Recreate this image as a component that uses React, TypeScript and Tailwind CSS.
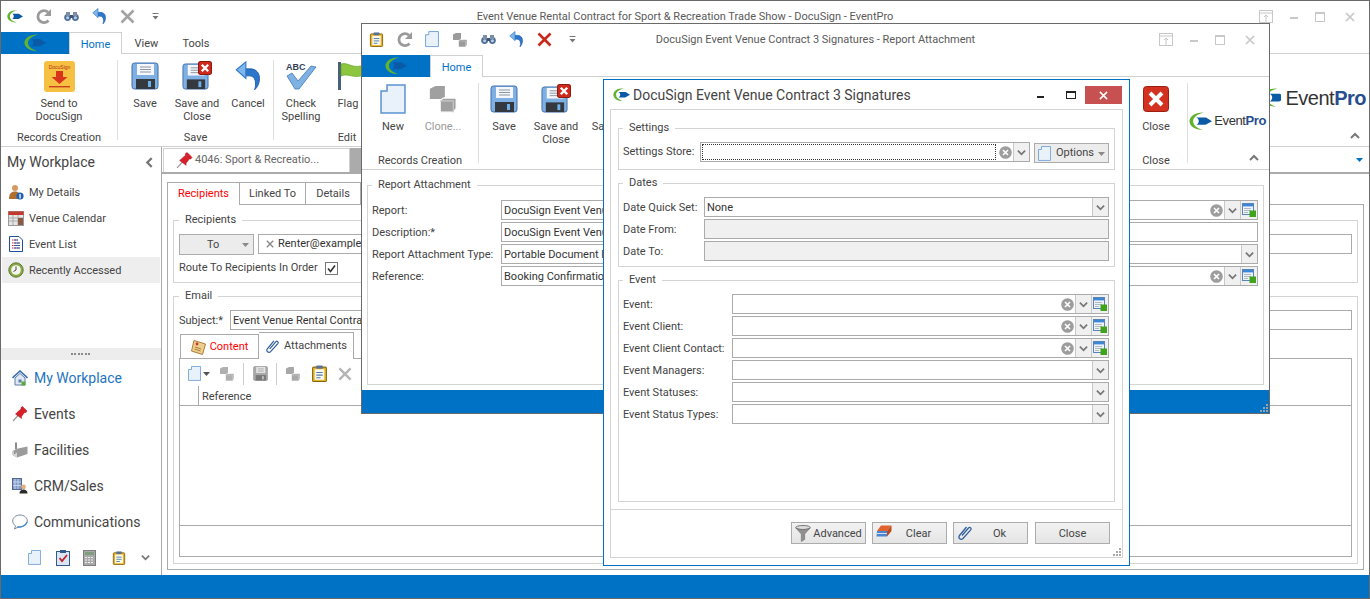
import { ReactNode } from "react"

// ---- icons ----
const Logo = ({ w = 16 }: { w?: number }) => (
  <svg width={w} height={w * 0.8} viewBox="0 0 25 20">
    <path d="M16 0.5C7 0 0.5 4.5 0.5 10C0.5 15.5 7 19.5 15 19.5C9 17.5 4.5 14.5 4.5 10C4.5 5.8 9 2.5 16 0.5Z" fill="#62b32e" />
    <path d="M8 6L18.5 6L25 10L18 14L8 14C11.5 12.5 11.5 7.5 8 6Z" fill="#0b5aa6" />
  </svg>
)
const Refresh = () => (
  <svg width="17" height="17" viewBox="0 0 17 17">
    <path d="M13.5 12.5A6 6 0 1 1 13 4.2" fill="none" stroke="#9a9a9a" strokeWidth="2.8" />
    <path d="M16 1V8H9Z" fill="#9a9a9a" />
  </svg>
)
const Binoculars = () => (
  <svg width="15" height="11" viewBox="0 0 15 11">
    <circle cx="3.6" cy="6.5" r="3.4" fill="#4f6f95" />
    <circle cx="11.4" cy="6.5" r="3.4" fill="#4f6f95" />
    <rect x="2" y="1" width="4" height="4" fill="#7b8ea6" />
    <rect x="9" y="1" width="4" height="4" fill="#7b8ea6" />
    <rect x="6" y="4" width="3" height="3" fill="#3c5270" />
    <circle cx="3.6" cy="6.8" r="1.5" fill="#b8cfe8" />
    <circle cx="11.4" cy="6.8" r="1.5" fill="#b8cfe8" />
  </svg>
)
const Undo = ({ s = 15 }: { s?: number }) => (
  <svg width={s} height={s * 1.1} viewBox="0 0 15 17">
    <path d="M4 4.5H8.5C12 4.5 13.8 7 13.8 10C13.8 12.5 12.8 15 11 16.5C12 13.5 12 8.5 8 8.5H5Z" fill="#2d76c9" stroke="#1d5aa5" strokeWidth=".5" />
    <path d="M6 0.5V10L0.5 5Z" fill="#7cb6ea" stroke="#2d76c9" strokeWidth=".6" />
  </svg>
)
const Cross = ({ c = "#a3a3a3", s = 15 }: { c?: string; s?: number }) => (
  <svg width={s} height={s} viewBox="0 0 15 15">
    <path d="M1.5 1.5L13.5 13.5M13.5 1.5L1.5 13.5" stroke={c} strokeWidth="2.6" />
  </svg>
)
const QatMore = () => (
  <svg width="7" height="7" viewBox="0 0 7 7">
    <path d="M0.5 0.5H6.5" stroke="#777" />
    <path d="M0.5 3H6.5L3.5 6.5Z" fill="#777" />
  </svg>
)
const DocuSignIcon = () => (
  <svg width="31" height="31" viewBox="0 0 31 31">
    <rect width="31" height="31" rx="3" fill="#f6c043" />
    <text x="15.5" y="8" textAnchor="middle" fontSize="5" fill="#b5301a" fontFamily="Liberation Sans, sans-serif">DocuSign</text>
    <path d="M12 10H19V16H23.5L15.5 23L7.5 16H12Z" fill="#d8351c" />
    <rect x="5" y="25" width="21" height="1.4" fill="#c9411f" />
  </svg>
)
const Floppy = ({ s = 28, gray = false }: { s?: number; gray?: boolean }) => (
  <svg width={s} height={s} viewBox="0 0 28 28">
    <rect x="1" y="1" width="26" height="26" rx="2.5" fill={gray ? "#a8a8a8" : "#7fb0e4"} stroke={gray ? "#8a8a8a" : "#3f6fae"} />
    <rect x="6" y="2" width="17" height="11" fill={gray ? "#e6e6e6" : "#f5f7fa"} />
    <path d="M9 5H20M9 7.5H20M9 10H20" stroke={gray ? "#999" : "#8d96a3"} />
    <rect x="5" y="17" width="19" height="10" fill={gray ? "#777" : "#34383f"} />
    <rect x="17" y="19" width="3" height="6" fill={gray ? "#ccc" : "#6fb0ea"} />
  </svg>
)
const RedX = ({ s = 13 }: { s?: number }) => (
  <svg width={s} height={s} viewBox="0 0 13 13">
    <rect x="0.5" y="0.5" width="12" height="12" rx="2" fill="#cf2a1c" stroke="#8c1a10" />
    <path d="M3.5 3.5L9.5 9.5M9.5 3.5L3.5 9.5" stroke="#fff" strokeWidth="2.2" />
  </svg>
)
const FloppyX = () => (
  <div className="relative h-[30px] w-[30px]">
    <div className="pt-[2px]">
      <Floppy s={27} />
    </div>
    <div className="absolute right-0 top-0">
      <RedX s={14} />
    </div>
  </div>
)
const CheckAbc = () => (
  <svg width="32" height="30" viewBox="0 0 32 30">
    <text x="1" y="9" fontSize="9" fontWeight="700" fill="#33415c" fontFamily="Liberation Sans, sans-serif">ABC</text>
    <path d="M2 15L7 12L13 20L26 5L31 6L14 28H10Z" fill="#7fb2e2" stroke="#3d79b8" strokeWidth=".8" />
  </svg>
)
const Flag = () => (
  <svg width="32" height="30" viewBox="0 0 32 30">
    <rect x="1" y="1" width="3" height="28" fill="#47607e" />
    <path d="M4 3C11 1 14 7 24 5L31 10L24 15C15 17 11 12 4 15Z" fill="#8cc63f" stroke="#5c9a22" strokeWidth=".6" />
  </svg>
)
const ClipBoard = ({ s = 16 }: { s?: number }) => (
  <svg width={s} height={s} viewBox="0 0 16 16">
    <rect x="1.5" y="2" width="13" height="13.5" rx="1" fill="#e6b422" stroke="#8a6510" />
    <rect x="3.5" y="4" width="9" height="10" fill="#fdf9e8" />
    <rect x="5" y="0.5" width="6" height="3" fill="#59708f" />
    <path d="M5 7H11M5 9.5H11M5 12H9" stroke="#4d79b0" />
  </svg>
)
const NewDoc = ({ s = 16 }: { s?: number }) => (
  <svg width={s} height={s * 1.15} viewBox="0 0 26 30">
    <path d="M1 7L7 7L7 1H25V29H1Z" fill="#e9f2fb" stroke="#5b93d1" strokeWidth="1.5" />
  </svg>
)
const Clone = ({ s = 16, c = "#9b9b9b" }: { s?: number; c?: string }) => (
  <svg width={s} height={s} viewBox="0 0 16 16">
    <path d="M1 2.5L4 1H9V6.5L8 8H1Z" fill={c} />
    <path d="M6.5 9L8 7.5H15V13L13.5 15H6.5Z" fill={c} stroke="#fff" strokeWidth=".6" />
    <path d="M6.5 9H13.5V15" fill="none" stroke="#c9c9c9" strokeWidth=".6" />
  </svg>
)
const BigClose = () => (
  <svg width="26" height="26" viewBox="0 0 26 26">
    <rect x="0.5" y="0.5" width="25" height="25" rx="3" fill="#d33220" stroke="#9c1e10" />
    <path d="M7 7L19 19M19 7L7 19" stroke="#fff" strokeWidth="4" />
  </svg>
)
const Person = () => (
  <svg width="16" height="16" viewBox="0 0 16 16">
    <circle cx="7" cy="4" r="3" fill="#d39a61" />
    <path d="M1 15C1 9 4 7.5 7 7.5C10 7.5 12 9 12 15Z" fill="#b06f2e" />
    <circle cx="12" cy="12" r="3.6" fill="#1d5fb0" />
    <rect x="11.4" y="10" width="1.3" height="4.4" fill="#fff" />
  </svg>
)
const Calendar = () => (
  <svg width="16" height="16" viewBox="0 0 16 16">
    <rect x="0.5" y="1.5" width="15" height="14" fill="#e6e6e6" stroke="#999" />
    <rect x="0.5" y="1.5" width="15" height="3.5" fill="#c0392b" />
    <path d="M1 8H15M1 11H15M5 5V15M10 5V15" stroke="#aaa" />
    <rect x="10" y="8" width="5" height="7" fill="#8a5a44" />
  </svg>
)
const ListDoc = () => (
  <svg width="14" height="16" viewBox="0 0 14 16">
    <path d="M0.5 0.5H10L13.5 4V15.5H0.5Z" fill="#fff" stroke="#1d4f91" />
    <path d="M3 4H9M3 7H11M3 9.5H11M3 12H11" stroke="#d23" strokeDasharray="1.5 1" />
    <path d="M5 4H9M5 7H11M5 9.5H11M5 12H11" stroke="#2d5fa5" />
  </svg>
)
const Clock = () => (
  <svg width="16" height="16" viewBox="0 0 16 16">
    <circle cx="8" cy="8" r="7.2" fill="#8aa84a" stroke="#5e7a2a" />
    <circle cx="8" cy="8" r="4.8" fill="#f5f5ef" />
    <path d="M8 4.5V8L5.5 9.5" fill="none" stroke="#444" />
  </svg>
)
const Pin = ({ s = 16 }: { s?: number }) => (
  <svg width={s} height={s} viewBox="0 0 16 16">
    <path d="M1 15L6 9.5" stroke="#9a9a9a" strokeWidth="1.2" />
    <path d="M5 6.5L9 3L9 1.5L10.5 0.5L15 5L14 6.5L12.5 6.5L9.5 10.5L9.5 12.5L3.5 8Z" fill="#d8202a" stroke="#a3121a" strokeWidth=".5" />
  </svg>
)
const House = () => (
  <svg width="16" height="16" viewBox="0 0 16 16">
    <path d="M0.5 8L8 1L15.5 8" fill="none" stroke="#3e6ea8" strokeWidth="1.6" />
    <path d="M3 8V15H13V8L8 3.5Z" fill="#dfe9f5" stroke="#5a7fa8" />
    <rect x="6.5" y="9.5" width="3" height="3" fill="#5a7fa8" />
    <rect x="9.5" y="11.5" width="4" height="4" fill="#5fa83a" />
  </svg>
)
const Factory = () => (
  <svg width="16" height="16" viewBox="0 0 16 16">
    <rect x="3" y="0.5" width="2" height="7" fill="#8b8b8b" />
    <path d="M0.5 9L6 6.5L15.5 4.5V12L5 15.5L0.5 13Z" fill="#9b9b9b" />
    <path d="M0.5 9L5 11V15.5L0.5 13Z" fill="#d4d4d4" />
    <path d="M2 11H3.5" stroke="#444" />
  </svg>
)
const Crm = () => (
  <svg width="16" height="16" viewBox="0 0 16 16">
    <rect x="0.5" y="0.5" width="9" height="11" fill="#7f97c7" stroke="#55688f" />
    <path d="M3 1V11M6 1V11M1 4H9M1 7.5H9" stroke="#c7d3ec" />
    <circle cx="11.5" cy="9" r="2.4" fill="#e2b07c" />
    <path d="M7.5 15.5C7.5 12.5 9.5 11.5 11.5 11.5C13.5 11.5 15.5 12.5 15.5 15.5Z" fill="#2b2b2b" />
  </svg>
)
const Bubble = () => (
  <svg width="16" height="16" viewBox="0 0 16 16">
    <path d="M8 1C3.8 1 0.7 3.7 0.7 7C0.7 9 1.8 10.7 3.5 11.8L2.5 15L6.5 12.8C10.5 13.4 15.3 11 15.3 7C15.3 3.7 12.2 1 8 1Z" fill="#fff" stroke="#7a8a9c" />
    <path d="M5 13C9.5 13.6 14 11.4 15 8" fill="none" stroke="#3b86d1" strokeWidth="1.2" />
  </svg>
)
const Clip = ({ s = 14 }: { s?: number }) => (
  <svg width={s} height={s} viewBox="0 0 16 16">
    <path d="M5 11L11.5 3.5C12.8 2 15 3.8 13.7 5.4L6 14C4 16 0.5 13.5 2.5 11L9.5 2.5" transform="translate(0 -.5)" fill="none" stroke="#2f5f9e" strokeWidth="1.3" />
  </svg>
)
const Note = () => (
  <svg width="15" height="15" viewBox="0 0 15 15">
    <path d="M3 0.5L14.5 4L11.5 14.5L0.5 11Z" fill="#eecd8e" stroke="#a97f3a" />
    <circle cx="6" cy="4" r="1.4" fill="#c0392b" />
    <path d="M4 7L10 9M3.5 9L9.5 11" stroke="#a97f3a" />
  </svg>
)
const Funnel = () => (
  <svg width="16" height="17" viewBox="0 0 16 17">
    <ellipse cx="8" cy="2.5" rx="7.3" ry="2" fill="#ddd" stroke="#777" />
    <path d="M0.8 3L6.3 9V16.5L9.7 14.5V9L15.2 3C12 5 4 5 0.8 3Z" fill="#8f8f8f" stroke="#666" strokeWidth=".5" />
  </svg>
)
const Eraser = () => (
  <svg width="16" height="13" viewBox="0 0 16 13">
    <path d="M5 0.5H15.5L11 6H1Z" fill="#e2622e" />
    <path d="M1 6H11V11.5H0.5Z" fill="#4a86d1" />
    <path d="M11 6L15.5 0.5V6L11 11.5Z" fill="#b94a1f" />
    <path d="M1 8.5H11" stroke="#cfe0f5" />
  </svg>
)
const GridAdd = () => (
  <svg width="14" height="14" viewBox="0 0 14 14">
    <rect x="0.5" y="0.5" width="11" height="11" fill="#eef3f9" stroke="#5a84b5" />
    <rect x="1" y="1" width="10" height="2.4" fill="#3c86d6" />
    <path d="M2 5.5H9M2 7.5H9M2 9.5H6" stroke="#b0b8c2" />
    <rect x="7.5" y="7.5" width="6.5" height="6.5" fill="#3fa41b" />
  </svg>
)
const ClearDot = () => (
  <svg width="13" height="13" viewBox="0 0 13 13">
    <circle cx="6.5" cy="6.5" r="6.3" fill="#9d9d9d" />
    <path d="M4 4L9 9M9 4L4 9" stroke="#fff" strokeWidth="1.6" />
  </svg>
)
const Chev = ({ dir = "down", c = "#777", s = 9 }: { dir?: "down" | "up" | "left"; c?: string; s?: number }) => {
  const d = dir === "down" ? "M1 3L5 7L9 3" : dir === "up" ? "M1 7L5 3L9 7" : "M7 1L3 5L7 9"
  return (
    <svg width={s} height={s} viewBox="0 0 10 10">
      <path d={d} fill="none" stroke={c} strokeWidth="2" />
    </svg>
  )
}
const Tri = ({ c = "#8a8a8a" }: { c?: string }) => (
  <svg width="7" height="4" viewBox="0 0 7 4">
    <path d="M0 0H7L3.5 4Z" fill={c} />
  </svg>
)
const Grip = () => (
  <svg width="10" height="10" viewBox="0 0 10 10" fill="#a8a8a8">
    <rect x="7" y="1" width="2" height="2" />
    <rect x="4" y="4" width="2" height="2" />
    <rect x="7" y="4" width="2" height="2" />
    <rect x="1" y="7" width="2" height="2" />
    <rect x="4" y="7" width="2" height="2" />
    <rect x="7" y="7" width="2" height="2" />
  </svg>
)
const Calc = () => (
  <svg width="13" height="16" viewBox="0 0 13 16">
    <rect x="0.5" y="0.5" width="12" height="15" fill="#a9a9a9" stroke="#7d7d7d" />
    <rect x="2" y="2" width="9" height="3" fill="#7f9e7f" />
    <path d="M2 7.5H11M2 10H11M2 12.5H11" stroke="#eee" strokeDasharray="2 1" />
  </svg>
)
const CheckBoard = () => (
  <svg width="14" height="16" viewBox="0 0 14 16">
    <rect x="0.5" y="1.5" width="13" height="14" fill="#dbe6f3" stroke="#33598d" />
    <rect x="4" y="0" width="6" height="3" fill="#33598d" />
    <path d="M3.5 8L6 11L11 5" fill="none" stroke="#c2202c" strokeWidth="1.8" />
  </svg>
)
const WinControls = () => (
  <div className="flex items-center justify-end">
    <svg width="14" height="13" viewBox="0 0 14 13" className="mr-[17px]">
      <rect x="0.5" y="0.5" width="13" height="12" fill="none" stroke="#c8c8c8" />
      <path d="M1 3H13" stroke="#c8c8c8" />
      <path d="M7 12V5M5 7L7 5L9 7" fill="none" stroke="#c8c8c8" />
    </svg>
    <svg width="10" height="3" viewBox="0 0 10 3" className="mr-[15px] mt-[3px]">
      <rect width="8" height="2" fill="#c8c8c8" />
    </svg>
    <svg width="10" height="10" viewBox="0 0 10 10" className="mr-[20px]">
      <rect x="0.5" y="0.5" width="9" height="9" fill="none" stroke="#c8c8c8" />
      <rect x="0" y="0" width="10" height="2" fill="#c8c8c8" />
    </svg>
    <div className="mr-[14px]">
      <Cross c="#c8c8c8" s={10} />
    </div>
  </div>
)

// ---- shared bits ----
const Qat = ({ children }: { children: ReactNode }) => (
  <div className="flex h-full w-[28px] items-center justify-center">{children}</div>
)

function TitleBar({ title, items }: { title: string; items: ReactNode[] }) {
  return (
    <div className="grid h-[31px] grid-cols-[1fr_auto_1fr] items-center bg-white">
      <div className="flex h-full items-center">
        {items.map((it, i) => (
          <Qat key={i}>{it}</Qat>
        ))}
      </div>
      <div className="pt-[1px] text-[#5a5a5a]">{title}</div>
      <WinControls />
    </div>
  )
}

function RibbonTabs({ extra }: { extra?: boolean }) {
  return (
    <div className="flex h-[22px] border-b border-[#d0d0d0] bg-white">
      <div className="flex h-[22px] w-[68px] items-center justify-center bg-[#0072c6]">
        <Logo w={22} />
      </div>
      <div className="-mb-px flex h-[22px] w-[53px] items-center justify-center border border-b-0 border-[#d0d0d0] bg-white pt-[3px] text-[#0072c6]">
        Home
      </div>
      {extra && (
        <>
          <div className="flex w-[49px] items-center justify-center pt-[4px] text-[#444]">View</div>
          <div className="flex w-[50px] items-center justify-center pt-[4px] text-[#444]">Tools</div>
        </>
      )}
    </div>
  )
}

function RibbonBtn({ w, icon, label, dim }: { w: number; icon: ReactNode; label: ReactNode; dim?: boolean }) {
  return (
    <div className="flex shrink-0 flex-col items-center pt-[6px]" style={{ width: w }}>
      <div className="flex h-[32px] items-center justify-center">{icon}</div>
      <div className={`mt-[5px] text-center leading-[13px] ${dim ? "text-[#9a9a9a]" : "text-[#444]"}`}>{label}</div>
    </div>
  )
}

function RibbonGroup({ w, caption, children }: { w: number; caption?: string; children: ReactNode }) {
  return (
    <div className="flex h-full shrink-0 flex-col" style={{ width: w }}>
      <div className="flex h-[77px]">{children}</div>
      <div className="h-[14px] text-center leading-[14px] text-[#444]">{caption}</div>
    </div>
  )
}

const RibbonSep = () => <div className="my-[6px] w-px shrink-0 bg-[#dedede]" />

function Group({ title, h, className, children }: { title: string; h: number; className?: string; children: ReactNode }) {
  return (
    <fieldset className={`border border-[#d4d4d4] ${className ?? ""}`} style={{ height: h }}>
      <legend className="px-[6px] leading-[16px] text-[#444]">{title}</legend>
      {children}
    </fieldset>
  )
}

function Input({ value, clear, drop, add, gray, focus, className }: { value?: string; clear?: boolean; drop?: boolean; add?: boolean; gray?: boolean; focus?: boolean; className?: string }) {
  return (
    <div className={`flex h-[20px] min-w-0 flex-1 items-stretch border border-[#ababab] ${gray ? "bg-[#f0f0f0]" : "bg-white"} ${className ?? ""}`}>
      <div className={`min-w-0 flex-1 overflow-hidden whitespace-nowrap px-[2px] leading-[20px] text-[#333] ${focus ? "m-px border border-dotted border-[#333] leading-[14px]" : ""}`}>{value}</div>
      {clear && (
        <div className="flex w-[16px] items-center justify-center">
          <ClearDot />
        </div>
      )}
      {drop && (
        <div className="flex w-[16px] items-center justify-center border-l border-[#c8c8c8] bg-[#f0f0f0]">
          <Chev />
        </div>
      )}
      {add && (
        <div className="flex w-[17px] items-center justify-center border-l border-[#c8c8c8] bg-[#f0f0f0]">
          <GridAdd />
        </div>
      )}
    </div>
  )
}

function Row({ label, labelW, children, className }: { label: string; labelW: number; children: ReactNode; className?: string }) {
  return (
    <div className={`flex h-[20px] items-center ${className ?? "mb-[2px]"}`}>
      <div className="shrink-0 whitespace-nowrap pt-[2px] text-[#444]" style={{ width: labelW }}>
        {label}
      </div>
      {children}
    </div>
  )
}

function DialogBtn({ icon, label, className }: { icon?: ReactNode; label: string; className?: string }) {
  return (
    <div className={`relative flex h-[22px] w-[75px] items-center justify-center border border-[#acacac] bg-gradient-to-b from-[#f2f2f2] to-[#e5e5e5] pt-[2px] text-[#444] ${icon ? "pl-[18px]" : ""} ${className ?? ""}`}>
      {icon && <div className="absolute left-[3px] top-[2px]">{icon}</div>}
      <span>{label}</span>
    </div>
  )
}

const SideItem = ({ icon, label, active }: { icon: ReactNode; label: string; active?: boolean }) => (
  <div className={`mx-px flex h-[26px] items-center ${active ? "bg-[#eeeeee]" : ""}`}>
    <div className="flex w-[27px] justify-center">{icon}</div>
    <span className="pt-[2px] text-[#444]">{label}</span>
  </div>
)

const NavItem = ({ icon, label, blue }: { icon: ReactNode; label: string; blue?: boolean }) => (
  <div className="flex h-[36px] items-center pl-[11px]">
    <div className="w-[22px]">{icon}</div>
    <span className={`text-[14px] ${blue ? "text-[#1f74c0]" : "text-[#444]"}`}>{label}</span>
  </div>
)

const GridTool = ({ children, w = 26 }: { children: ReactNode; w?: number }) => (
  <div className="flex items-center justify-center" style={{ width: w }}>
    {children}
  </div>
)

const ToolSep = () => <div className="mx-[3px] h-[22px] w-px bg-[#cfcfcf]" />

function MainWindow() {
  return (
    <div className="flex h-[599px] w-[1370px] flex-col overflow-hidden border border-[#6a6a6a] bg-white">
      <TitleBar
        title="Event Venue Rental Contract for Sport & Recreation Trade Show - DocuSign - EventPro"
        items={[<Logo key="a" />, <Refresh key="b" />, <Binoculars key="c" />, <Undo key="d" />, <Cross key="e" />, <QatMore key="f" />]}
      />
      <RibbonTabs extra />
      <div className="flex h-[93px] border-b border-[#d0d0d0]">
        <RibbonGroup w={116} caption="Records Creation">
          <RibbonBtn w={116} icon={<DocuSignIcon />} label={<>Send to<br />DocuSign</>} />
        </RibbonGroup>
        <RibbonSep />
        <RibbonGroup w={155} caption="Save">
          <div className="w-[2px]" />
          <RibbonBtn w={50} icon={<Floppy />} label="Save" />
          <RibbonBtn w={54} icon={<FloppyX />} label={<>Save and<br />Close</>} />
          <RibbonBtn w={48} icon={<Undo s={27} />} label="Cancel" />
        </RibbonGroup>
        <RibbonSep />
        <RibbonGroup w={146} caption="Edit">
          <RibbonBtn w={54} icon={<CheckAbc />} label={<>Check<br />Spelling</>} />
          <RibbonBtn w={40} icon={<div className="ml-[10px]"><Flag /></div>} label="Flag" />
        </RibbonGroup>
        <div className="flex-1" />
        <div className="flex w-[104px] flex-col items-end pr-[3px]">
          <div className="mt-[33px] flex items-center">
            <div className="mr-[5px] w-[19px] overflow-hidden">
              <Logo w={24} />
            </div>
            <span className="font-['Liberation_Sans',sans-serif] text-[20px] leading-[22px] tracking-[-0.5px] text-[#333]">
              Event<b className="text-[#274e8f]">Pro</b>
            </span>
          </div>
          <div className="mr-[6px] mt-[22px]">
            <Chev dir="up" s={10} />
          </div>
        </div>
      </div>
      <div className="flex min-h-0 flex-1">
        {/* left navigation */}
        <div className="flex w-[161px] shrink-0 flex-col border-r border-[#a9a9a9]">
          <div className="flex h-[32px] items-center justify-between pb-[1px] pl-[6px] pr-[6px]">
            <span className="text-[14px] text-[#444]">My Workplace</span>
            <Chev dir="left" s={11} />
          </div>
          <SideItem icon={<Person />} label="My Details" />
          <SideItem icon={<Calendar />} label="Venue Calendar" />
          <SideItem icon={<ListDoc />} label="Event List" />
          <SideItem icon={<Clock />} label="Recently Accessed" active />
          <div className="flex-1" />
          <div className="flex h-[12px] items-center justify-center bg-[#ededed]">
            <div className="h-[2px] w-[20px] bg-[repeating-linear-gradient(90deg,#8a8a8a_0_2px,transparent_2px_3.5px)]" />
          </div>
          <NavItem blue icon={<House />} label="My Workplace" />
          <NavItem icon={<Pin />} label="Events" />
          <NavItem icon={<Factory />} label="Facilities" />
          <NavItem icon={<Crm />} label="CRM/Sales" />
          <NavItem icon={<Bubble />} label="Communications" />
          <div className="flex h-[35px] items-center pl-[27px]">
            <div className="w-[28px]"><NewDoc s={13} /></div>
            <div className="w-[27px]"><CheckBoard /></div>
            <div className="w-[29px]"><Calc /></div>
            <div className="w-[29px]"><ClipBoard s={14} /></div>
            <Chev s={9} />
          </div>
        </div>
        {/* document area */}
        <div className="flex min-w-0 flex-1 flex-col">
          <div className="flex h-[27px] items-end border-b-2 border-[#ababab] pl-px">
            <div className="flex h-[24px] w-[187px] items-center border border-b-0 border-[#d0d0d0] pl-[12px] text-[#666]">
              <Pin s={17} />
              <span className="ml-[2px]">4046: Sport &amp; Recreatio...</span>
            </div>
            <div className="h-[24px] w-[40px] bg-[#ababab]" />
            <div className="flex-1" />
            <div className="mb-[10px] mr-[6px]">
              <Tri c="#0072c6" />
            </div>
          </div>
          <div className="flex min-h-0 flex-1 flex-col px-[5px] pb-[5px] pt-[7px]">
            <div className="flex h-[23px] items-end text-[#444]">
              <div className="-mb-px z-10 flex h-[23px] w-[73px] items-center justify-center border border-b-0 border-[#ababab] bg-white text-[#f00]">Recipients</div>
              <div className="flex h-[22px] w-[66px] items-center justify-center border border-b-0 border-l-0 border-[#ababab] pt-[1px]">Linked To</div>
              <div className="flex h-[22px] w-[55px] items-center justify-center border border-b-0 border-l-0 border-[#ababab] pt-[1px]">Details</div>
            </div>
            <div className="min-h-0 flex-1 border border-[#ababab] px-[5px] pt-[7px]">
              <Group title="Recipients" h={71} className="px-[5px] pt-[6px]">
                <div className="flex items-start">
                  <div className="flex h-[21px] w-[75px] items-center justify-between border border-[#acacac] bg-[#ececec] pl-[27px] pr-[4px] pt-[1px] text-[#444]">
                    <span>To</span>
                    <Tri />
                  </div>
                  <div className="ml-[4px] flex h-[20px] flex-1 items-center border border-[#ababab] pl-[7px] text-[#333]">
                    <Cross c="#888" s={8} />
                    <span className="ml-[4px]">Renter@example</span>
                  </div>
                </div>
                <div className="mt-[4px] flex h-[18px] items-center text-[#444]">
                  Route To Recipients In Order
                  <div className="ml-[7px] flex h-[13px] w-[13px] items-center justify-center border border-[#777]">
                    <svg width="9" height="9" viewBox="0 0 9 9"><path d="M1 4.5L3.5 7.5L8 1.5" fill="none" stroke="#333" strokeWidth="1.6" /></svg>
                  </div>
                </div>
              </Group>
              <Group title="Email" h={276} className="mt-[5px] px-[5px] pt-[6px]">
                <Row label="Subject:*" labelW={51} className="mb-0">
                  <Input value="Event Venue Rental Contra" />
                </Row>
                <div className="mt-[2px] flex h-[26px] items-end pl-px">
                  <div className="flex h-[24px] w-[79px] items-center justify-center gap-[4px] border border-b-0 border-[#ababab] pt-[1px] text-[#f00]">
                    <Note />
                    Content
                  </div>
                  <div className="-mb-px z-10 flex h-[27px] w-[95px] items-center justify-center gap-[4px] border border-b-0 border-l-0 border-[#ababab] bg-white text-[#444]">
                    <Clip s={15} />
                    Attachments
                  </div>
                </div>
                <div className="flex h-[199px] flex-col border border-[#ababab]">
                  <div className="flex h-[27px] items-center pl-[6px] pt-[2px]">
                    <div className="flex w-[28px] items-center gap-[2px] pl-[2px]">
                      <NewDoc s={13} />
                      <Tri c="#555" />
                    </div>
                    <GridTool><Clone c="#b0b0b0" /></GridTool>
                    <ToolSep />
                    <GridTool w={26}><Floppy s={15} gray /></GridTool>
                    <ToolSep />
                    <GridTool w={26}><Clone c="#a8a8a8" /></GridTool>
                    <GridTool w={26}><ClipBoard s={17} /></GridTool>
                    <GridTool w={26}><Cross c="#b5b5b5" s={14} /></GridTool>
                  </div>
                  <div className="flex h-[20px] border-b border-[#ababab]">
                    <div className="w-[19px] border-r border-[#ababab]" />
                    <div className="pl-[3px] pt-[2px] leading-[18px] text-[#444]">Reference</div>
                  </div>
                  <div className="flex-1" />
                  <div className="h-[31px] border-t border-[#ababab]" />
                </div>
              </Group>
            </div>
          </div>
        </div>
      </div>
      <div className="h-[23px] bg-[#0072c6]" />
    </div>
  )
}

function AttachmentWindow() {
  return (
    <div className="absolute left-[361px] top-[23px] flex h-[391px] w-[909px] flex-col border border-[#6a6a6a] bg-white">
      <TitleBar
        title="DocuSign Event Venue Contract 3 Signatures - Report Attachment"
        items={[<ClipBoard key="a" s={15} />, <Refresh key="b" />, <NewDoc key="c" s={14} />, <Clone key="d" />, <Binoculars key="e" />, <Undo key="f" />, <Cross key="g" c="#c8281c" />, <QatMore key="h" />]}
      />
      <RibbonTabs />
      <div className="flex h-[93px] border-b border-[#d0d0d0]">
        <RibbonGroup w={116} caption="Records Creation">
          <div className="w-[6px]" />
          <RibbonBtn w={50} icon={<NewDoc s={26} />} label="New" />
          <RibbonBtn w={50} dim icon={<Clone s={30} c="#a0a0a0" />} label="Clone..." />
        </RibbonGroup>
        <RibbonSep />
        <RibbonGroup w={420}>
          <RibbonBtn w={50} icon={<Floppy />} label="Save" />
          <RibbonBtn w={54} icon={<FloppyX />} label={<>Save and<br />Close</>} />
          <div className="w-[9px]" />
          <RibbonBtn w={12} icon={<span />} label="Sa" />
        </RibbonGroup>
        <div className="flex-1" />
        <RibbonGroup w={62} caption="Close">
          <RibbonBtn w={62} icon={<BigClose />} label="Close" />
        </RibbonGroup>
        <RibbonSep />
        <div className="flex w-[81px] flex-col items-end pr-[3px]">
          <div className="mt-[35px] flex items-center">
            <Logo w={23} />
            <span className="ml-[2px] font-['Liberation_Sans',sans-serif] text-[13px] leading-[16px] tracking-[-0.4px] text-[#333]">
              Event<b className="text-[#274e8f]">Pro</b>
            </span>
          </div>
          <div className="mr-[7px] mt-[23px]">
            <Chev dir="up" s={10} />
          </div>
        </div>
      </div>
      <div className="min-h-0 flex-1 px-[5px] pt-[7px]">
        <Group title="Report Attachment" h={208} className="pl-[4px] pr-[5px] pt-[7px]">
          <Row label="Report:" labelW={129}>
            <Input value="DocuSign Event Venu" clear drop add />
          </Row>
          <Row label="Description:*" labelW={129}>
            <Input value="DocuSign Event Venu" />
          </Row>
          <Row label="Report Attachment Type:" labelW={129}>
            <Input value="Portable Document F" drop />
          </Row>
          <Row label="Reference:" labelW={129}>
            <Input value="Booking Confirmation" clear drop add />
          </Row>
        </Group>
      </div>
      <div className="relative h-[23px] bg-[#0072c6]">
        <div className="absolute bottom-0 right-0 opacity-90">
          <Grip />
        </div>
      </div>
    </div>
  )
}

function SettingsDialog() {
  return (
    <div className="absolute left-[603px] top-[79px] flex h-[487px] w-[527px] flex-col border border-[#0072c6] bg-white px-[6px] pb-[7px]">
      <div className="flex h-[29px] shrink-0 items-center pt-[1px]">
        <div className="ml-[3px] w-[20px]"><Logo w={17} /></div>
        <span className="text-[14px] text-[#444]">DocuSign Event Venue Contract 3 Signatures</span>
        <div className="flex-1" />
        <div className="mr-[22px] mt-[4px] h-[2px] w-[7px] bg-[#222]" />
        <div className="mr-[9px] h-[8px] w-[10px] border border-t-2 border-[#222]" />
        <div className="mr-px flex h-[18px] w-[37px] items-center justify-center bg-[#c75050]">
          <Cross c="#fff" s={9} />
        </div>
      </div>
      <div className="relative flex min-h-0 flex-1 flex-col border border-[#d4d4d4] px-[7px] pt-[10px]">
        <Group title="Settings" h={50} className="pl-[4px] pr-[5px] pt-[6px]">
          <div className="flex items-start">
            <div className="w-[77px] shrink-0 whitespace-nowrap leading-[20px] text-[#444]">Settings Store:</div>
            <Input focus clear drop />
            <div className="ml-[4px] mt-px flex h-[20px] w-[75px] shrink-0 items-center border border-[#acacac] bg-[#ececec] pl-[3px] pr-[3px] pt-[1px] text-[#444]">
              <NewDoc s={13} />
              <span className="ml-[5px] flex-1">Options</span>
              <Tri />
            </div>
          </div>
        </Group>
        <Group title="Dates" h={92} className="mt-[5px] pl-[4px] pr-[5px] pt-[6px]">
          <Row label="Date Quick Set:" labelW={81}>
            <Input value="None" drop />
          </Row>
          <Row label="Date From:" labelW={81}>
            <Input gray />
          </Row>
          <Row label="Date To:" labelW={81}>
            <Input gray />
          </Row>
        </Group>
        <Group title="Event" h={230} className="mt-[5px] pl-[4px] pr-[5px] pt-[6px]">
          <Row label="Event:" labelW={109}><Input clear drop add /></Row>
          <Row label="Event Client:" labelW={109}><Input clear drop add /></Row>
          <Row label="Event Client Contact:" labelW={109}><Input clear drop add /></Row>
          <Row label="Event Managers:" labelW={109}><Input drop /></Row>
          <Row label="Event Statuses:" labelW={109}><Input drop /></Row>
          <Row label="Event Status Types:" labelW={109}><Input drop /></Row>
        </Group>
        <div className="-mx-[7px] mt-[7px] flex flex-1 items-start justify-end gap-[6px] border-t border-[#d4d4d4] pr-[12px] pt-[12px]">
          <DialogBtn icon={<Funnel />} label="Advanced" />
          <DialogBtn icon={<Eraser />} label="Clear" />
          <DialogBtn icon={<Clip s={16} />} label="Ok" />
          <DialogBtn label="Close" className="ml-px" />
        </div>
        <div className="absolute bottom-0 right-0">
          <Grip />
        </div>
      </div>
    </div>
  )
}

export default function App() {
  return (
    <div className="relative h-[599px] w-[1370px] overflow-hidden font-['Roboto',sans-serif] text-[11px]">
      <MainWindow />
      <AttachmentWindow />
      <SettingsDialog />
    </div>
  )
}
